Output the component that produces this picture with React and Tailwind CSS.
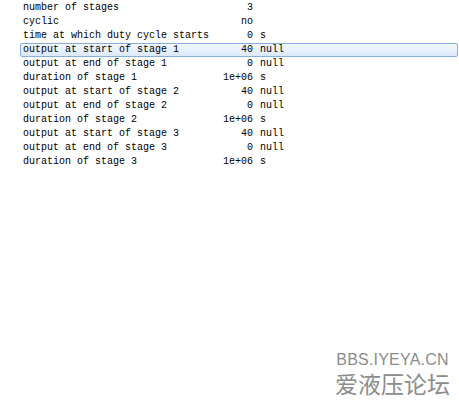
const rows = [
  { label: 'number of stages', value: '3', unit: '' },
  { label: 'cyclic', value: 'no', unit: '' },
  { label: 'time at which duty cycle starts', value: '0', unit: 's' },
  { label: 'output at start of stage 1', value: '40', unit: 'null', selected: true },
  { label: 'output at end of stage 1', value: '0', unit: 'null' },
  { label: 'duration of stage 1', value: '1e+06', unit: 's' },
  { label: 'output at start of stage 2', value: '40', unit: 'null' },
  { label: 'output at end of stage 2', value: '0', unit: 'null' },
  { label: 'duration of stage 2', value: '1e+06', unit: 's' },
  { label: 'output at start of stage 3', value: '40', unit: 'null' },
  { label: 'output at end of stage 3', value: '0', unit: 'null' },
  { label: 'duration of stage 3', value: '1e+06', unit: 's' },
];

export default function App() {
  return (
    <div className="relative w-[459px] h-[403px] bg-white overflow-hidden">
      {/* parameter list */}
      <div className="mt-[1px] ml-[20px] w-[438px] flex flex-col font-['Liberation_Mono',monospace] text-[10px] text-black">
        {rows.map((row, i) => (
          <div
            key={i}
            className={`flex items-center h-[14px] pl-[2px] border rounded-[2px] ${
              row.selected
                ? 'border-[#86aee0] bg-gradient-to-b from-[#f3f8fe] to-[#dbe9fb]'
                : 'border-transparent'
            }`}
          >
            <span className="w-[190px] whitespace-pre leading-none">{row.label}</span>
            <span className="w-[40px] text-right whitespace-pre leading-none">{row.value}</span>
            <span className="ml-[7px] whitespace-pre leading-none">{row.unit}</span>
          </div>
        ))}
      </div>

      {/* watermark */}
      <div className="absolute right-[9px] bottom-[8px] flex flex-col items-center gap-[5px] text-[#8c8c8c]">
        <span className="font-['Liberation_Sans',sans-serif] text-[16px] leading-[15px] tracking-[0.2px]">
          BBS.IYEYA.CN
        </span>
        <span className="font-['Noto_Sans_CJK_SC',sans-serif] text-[23px] leading-[23px]">
          爱液压论坛
        </span>
      </div>
    </div>
  );
}
